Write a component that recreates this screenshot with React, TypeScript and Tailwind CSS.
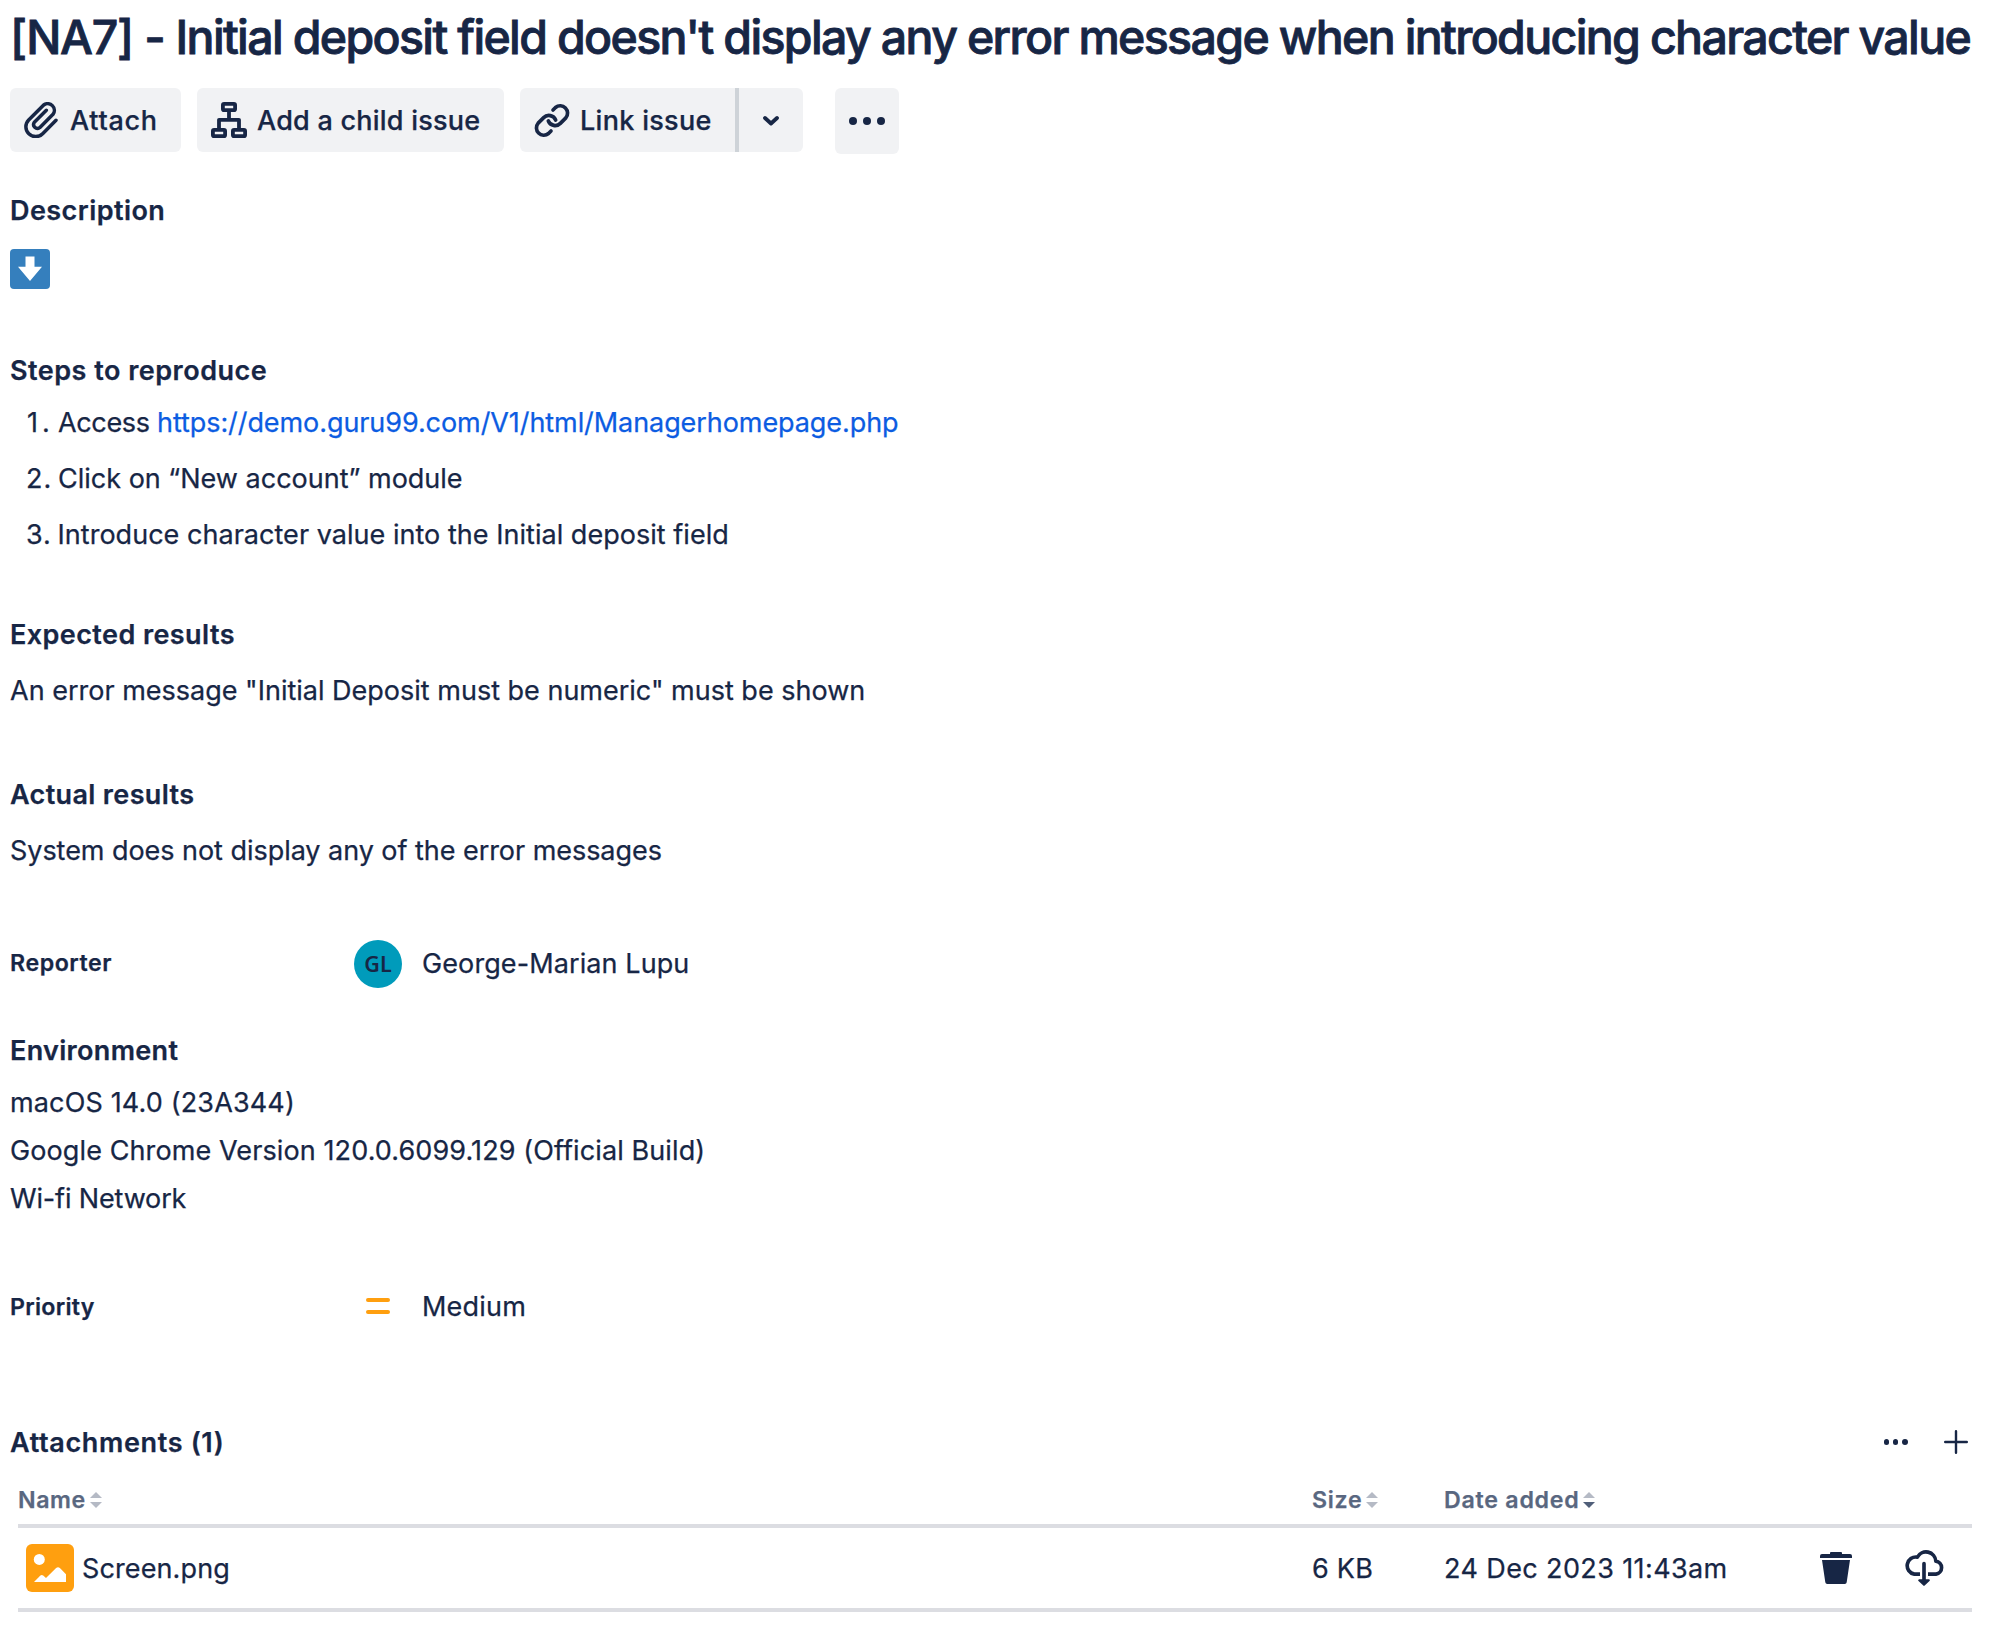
import React from "react";

function AttachIcon() {
  return (
    <svg className="h-9 w-[34px] shrink-0" viewBox="42 54 102 108" fill="none" stroke="currentColor" strokeWidth="10.5" strokeLinecap="round" strokeLinejoin="round">
      <path d="M138 109L98 149A29.3 29.3 0 0 1 56 108L101 63A20 20 0 0 1 129 91L89 131A11.5 11.5 0 0 1 73 115L109 79" />
    </svg>
  );
}

function ChildIssueIcon() {
  return (
    <svg className="h-9 w-9 shrink-0" viewBox="0 0 36 36" fill="none" stroke="currentColor" strokeWidth="3.8">
      <rect x="11.9" y="1.9" width="12.2" height="6.2" rx="1.2" />
      <rect x="1.9" y="27.900" width="12.2" height="6.2" rx="1.2" />
      <rect x="21.900" y="27.900" width="12.2" height="6.2" rx="1.2" />
      <path d="M18 9v8M8 27v-9.200h20V27" strokeLinejoin="round" />
    </svg>
  );
}

function LinkIcon() {
  return (
    <svg className="h-[35px] w-9 shrink-0" viewBox="102 101 108 103" fill="none" stroke="currentColor" strokeWidth="11" strokeLinecap="round" strokeLinejoin="round">
      <path d="M159 121L166.500 113.500A22 22 0 0 1 197.500 144.500L181 161A22 22 0 0 1 145 154" />
      <path d="M153 184L145.500 191.500A22 22 0 0 1 114.500 160.500L131 144A22 22 0 0 1 167 151" />
    </svg>
  );
}

function TrashIcon() {
  return (
    <svg className="h-8 w-8" viewBox="0 0 32 32" fill="currentColor">
      <path d="M10 2V1a1 1 0 0 1 1-1h10a1 1 0 0 1 1 1v1h8a2 2 0 0 1 2 2v2H0V4a2 2 0 0 1 2-2z" />
      <path d="M2 8h28l-3.300 22.300a2 2 0 0 1-2 1.700H7.300a2 2 0 0 1-2-1.700z" />
    </svg>
  );
}

function CloudDownloadIcon() {
  return (
    <svg className="h-9 w-10" viewBox="342 390 120 108" fill="none" stroke="currentColor" strokeWidth="11">
      <path d="M390 462.500H373A25.500 25.500 0 1 1 382 411.500A29.500 29.500 0 0 1 437.500 423.500A19.700 19.700 0 0 1 438 462.500H414" strokeLinejoin="round" />
      <path d="M402 431V484" strokeLinecap="round" />
      <path d="M387.500 481H416.500L402 494.500Z" fill="currentColor" strokeWidth="6" strokeLinejoin="round" />
    </svg>
  );
}

function ImageFileIcon() {
  return (
    <svg className="h-12 w-12 shrink-0" viewBox="0 0 48 48">
      <rect width="48" height="48" rx="6" fill="#ff9f0f" />
      <circle cx="13.300" cy="15.400" r="5.500" fill="#fff" />
      <path d="M8 38l6.400-6.500q1.400-1.100 2.800 0L20 33.900 30.100 24q1.900-1.600 3.800 0L40 30.300V38z" fill="#fff" />
    </svg>
  );
}

function SortArrows({ active = false }: { active?: boolean }) {
  return (
    <svg className="h-4 w-3 shrink-0" viewBox="0 0 12 16">
      <path d="M6 0l6 6H0z" fill="#b5bac5" />
      <path d="M6 16l6-6H0z" fill={active ? "#505f79" : "#b5bac5"} />
    </svg>
  );
}

const buttonStyle = "flex h-16 items-center bg-[#f1f2f4] font-medium";

export default function App() {
  return (
    <main className="flex h-[1628px] w-[1994px] flex-col overflow-hidden bg-white pl-2.5 pt-[7px] font-['Inter',sans-serif] text-[27px] leading-10 font-normal whitespace-nowrap text-[#172645] [-webkit-text-stroke:0.25px]">
      <h1 className="text-[46.5px] leading-[60px] font-medium tracking-[-1.661px] [-webkit-text-stroke:0.8px]">
        <span className="tracking-[-1.250px]">[NA7] - </span>
        Initial deposit field doesn't display any error message when introducing character value
      </h1>

      <div className="mt-[21px] flex h-[66px] items-start">
        <button className={`${buttonStyle} w-[171px] rounded-md pl-3.5`}>
          <AttachIcon />
          <span className="ml-3 pt-0.5 tracking-[0.715px]">Attach</span>
        </button>
        <button className={`${buttonStyle} ml-4 w-[307px] rounded-md pl-3.5`}>
          <ChildIssueIcon />
          <span className="ml-2.5 pt-0.5 tracking-[0.240px]">Add a child issue</span>
        </button>
        <button className={`${buttonStyle} ml-4 w-[215px] rounded-l-md pl-3.5`}>
          <LinkIcon />
          <span className="ml-2.5 pt-0.5 tracking-[0.307px]">Link issue</span>
        </button>
        <button className={`${buttonStyle} w-[68px] rounded-r-md border-l-4 border-[#ced3d8] pl-6`} aria-label="More link options">
          <svg className="h-3 w-4" viewBox="0 0 16 12" fill="none" stroke="currentColor" strokeWidth="3.800" strokeLinecap="round" strokeLinejoin="round">
            <path d="M2 4l6 5.500L14 4" />
          </svg>
        </button>
        <button className="ml-8 flex h-[66px] w-16 items-center justify-center gap-1.5 rounded-md bg-[#f1f2f4]" aria-label="More actions">
          <span className="size-2 rounded-full bg-current" />
          <span className="size-2 rounded-full bg-current" />
          <span className="size-2 rounded-full bg-current" />
        </button>
      </div>

      <h2 className="mt-[37px] font-semibold tracking-[0.430px]">Description</h2>
      <svg className="mt-[18px] size-10 shrink-0" viewBox="0 0 40 40">
        <rect width="40" height="40" rx="4" fill="#357fbd" />
        <path d="M15.500 7.500h9v10.200H32L20 32 8 17.700h7.500z" fill="#fff" />
      </svg>

      <h2 className="mt-[62px] font-semibold tracking-[0.490px]">Steps to reproduce</h2>
      <ol className="mt-3 flex flex-col gap-4">
        <li className="flex">
          <span className="w-12 pl-[17px] tracking-[4px]">1.</span>
          <span className="w-[99px] tracking-[-0.350px]">Access</span>
          <a className="tracking-[-0.075px] text-[#0c5ce2]">https://demo.guru99.com/V1/html/Managerhomepage.php</a>
        </li>
        <li className="flex">
          <span className="w-12 pl-4 tracking-[1px]">2.</span>
          <span>Click on “New account” module</span>
        </li>
        <li className="flex">
          <span className="w-[47.500px] pl-4 tracking-[1px]">3.</span>
          <span className="tracking-[0.032px]">Introduce character value into the Initial deposit field</span>
        </li>
      </ol>

      <h2 className="mt-[60px] font-semibold tracking-[0.420px]">Expected results</h2>
      <p className="mt-4">An error message "Initial Deposit must be numeric" must be shown</p>

      <h2 className="mt-16 font-semibold tracking-[0.350px]">Actual results</h2>
      <p className="mt-4 tracking-[-0.045px]">System does not display any of the error messages</p>

      <div className="mt-[69px] flex h-12 items-center">
        <span className="w-[344px] pb-[3px] text-[23.200px] font-semibold tracking-[0.550px]">Reporter</span>
        <span className="flex size-12 items-center justify-center rounded-full bg-[#009bbb] font-['Noto_Sans',sans-serif] text-[21.500px] font-semibold [-webkit-text-stroke:0px]">GL</span>
        <span className="ml-5 pb-px tracking-[0.100px]">George-Marian Lupu</span>
      </div>

      <h2 className="mt-[43px] font-semibold tracking-[0.320px]">Environment</h2>
      <div className="mt-3 flex flex-col gap-2">
        <p className="tracking-[0.150px]">macOS 14.0 (23A344)</p>
        <p className="tracking-[0.105px]">Google Chrome Version 120.0.6099.129 (Official Build)</p>
        <p className="tracking-[-0.150px]">Wi-fi Network</p>
      </div>

      <div className="mt-[67px] flex h-10 items-center">
        <span className="w-[356px] pt-0.5 text-[23.200px] font-semibold tracking-[0.290px]">Priority</span>
        <span className="flex w-6 flex-col gap-2">
          <span className="h-1 rounded-full bg-[#ff9f0f]" />
          <span className="h-1 rounded-full bg-[#ff9f0f]" />
        </span>
        <span className="ml-8 pt-0.5 tracking-[0.220px]">Medium</span>
      </div>

      <div className="mt-24 flex h-10 items-center">
        <h2 className="w-[1873.500px] pt-0.5 font-semibold tracking-[0.650px]">Attachments (1)</h2>
        <span className="flex gap-[3.800px]">
          <span className="size-[5.600px] rounded-full bg-current" />
          <span className="size-[5.600px] rounded-full bg-current" />
          <span className="size-[5.600px] rounded-full bg-current" />
        </span>
        <svg className="ml-[36.100px] size-6" viewBox="0 0 24 24" stroke="currentColor" strokeWidth="2.400" strokeLinecap="round">
          <path d="M12 1.200v21.600M1.200 12h21.600" />
        </svg>
      </div>

      <div className="mt-[18px] ml-2 w-[1954px]">
        <div className="grid h-12 grid-cols-[1294px_132px_1fr] border-b-4 border-[#dcdde2] text-[23.200px] font-semibold text-[#596780]">
          <div className="flex h-10 items-center">
            <span className="w-[72px] tracking-[0.600px]">Name</span>
            <SortArrows />
          </div>
          <div className="flex h-10 items-center">
            <span className="w-[54px] tracking-[0.700px]">Size</span>
            <SortArrows />
          </div>
          <div className="flex h-10 items-center">
            <span className="w-[139px] tracking-[0.750px]">Date added</span>
            <SortArrows active />
          </div>
        </div>
        <div className="grid h-[84px] grid-cols-[1294px_132px_376px_84px_1fr] items-center border-b-4 border-[#dcdde2]">
          <div className="flex items-center pl-2">
            <ImageFileIcon />
            <span className="ml-2 pt-0.5 tracking-[0.120px]">Screen.png</span>
          </div>
          <span className="pt-0.5 tracking-[0.250px]">6 KB</span>
          <span className="pt-0.5 tracking-[0.390px]">24 Dec 2023 11:43am</span>
          <TrashIcon />
          <CloudDownloadIcon />
        </div>
      </div>
    </main>
  );
}
